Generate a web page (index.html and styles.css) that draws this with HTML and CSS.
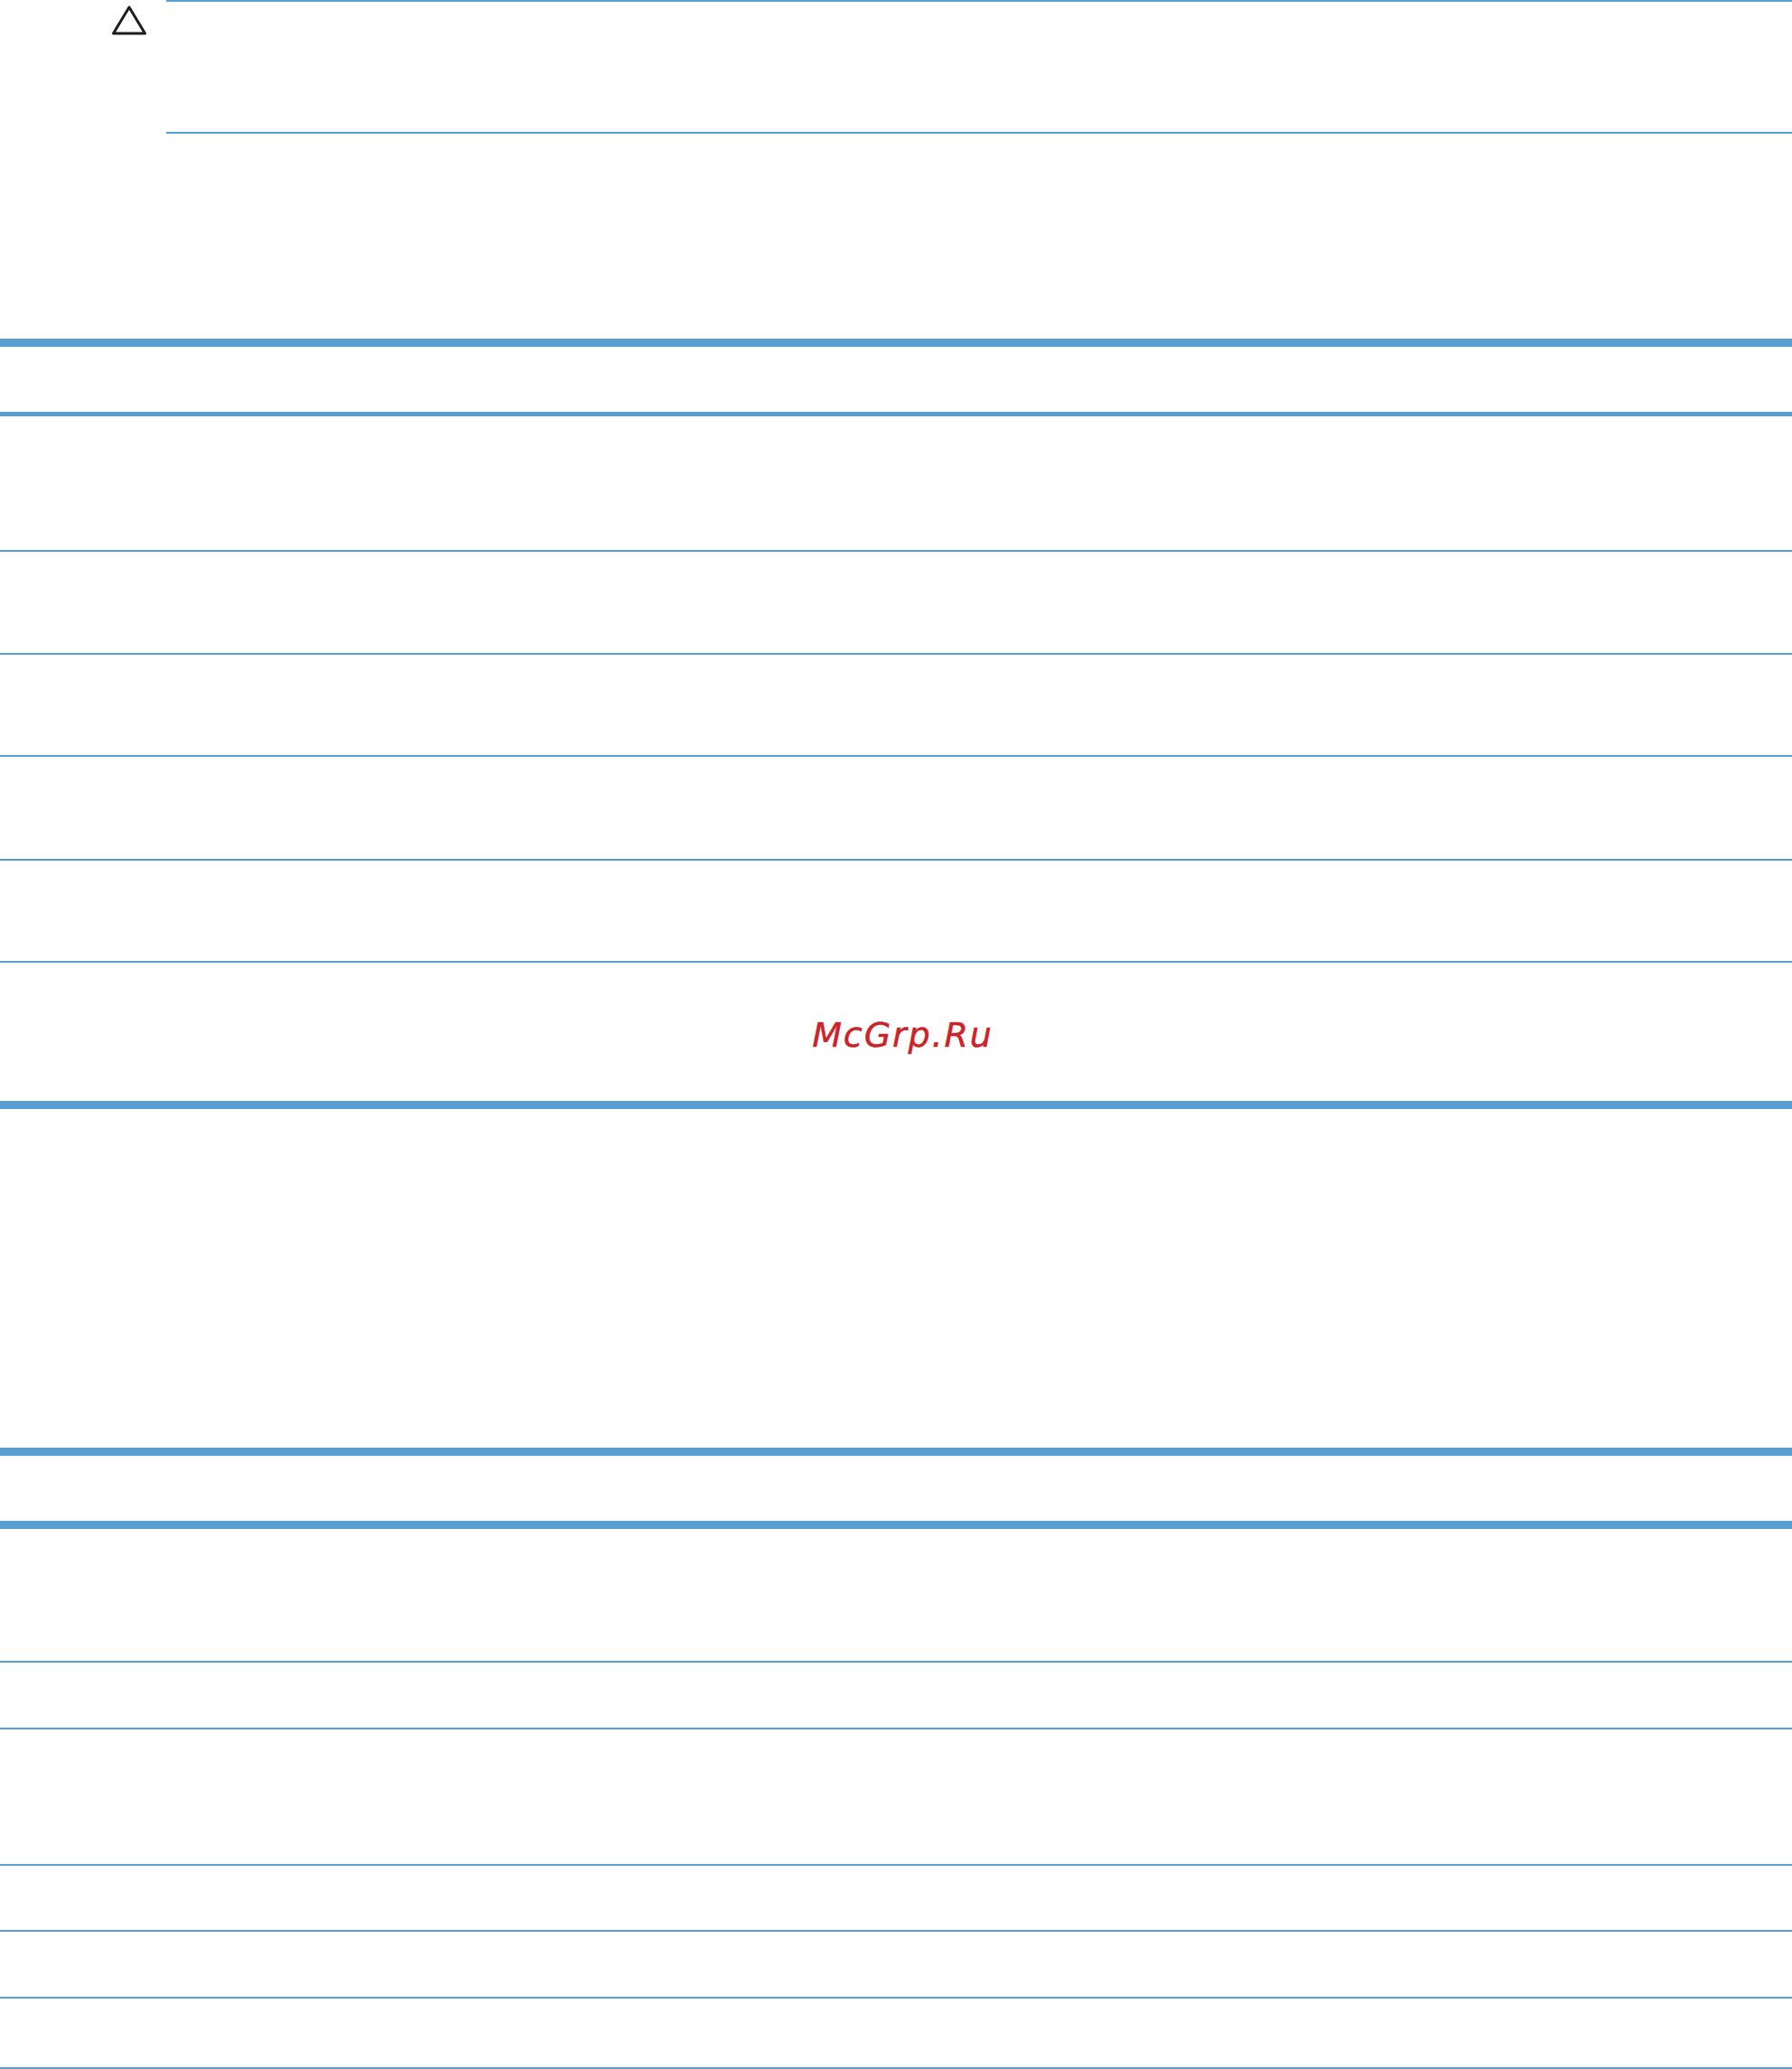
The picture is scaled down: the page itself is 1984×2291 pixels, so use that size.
FILE: index.html
```html
<!DOCTYPE html>
<html lang="ru">
<head>
<meta charset="utf-8">
<title>McGrp.Ru</title>
<link rel="stylesheet" href="styles.css">
</head>
<body>
<main class="page">
  <section class="note">
    <div class="note-icon">
      <svg class="caution" viewBox="0 0 38 33" width="38" height="33" aria-hidden="true">
        <path d="M19 2 L36.500 31 L1.500 31 Z" fill="none" stroke="#1d1d1b" stroke-width="3" stroke-linejoin="round"/>
      </svg>
    </div>
    <div class="note-body"></div>
  </section>

  <section class="table table-one">
    <div class="row head"></div>
    <div class="row"></div>
    <div class="row"></div>
    <div class="row"></div>
    <div class="row"></div>
    <div class="row"></div>
    <div class="row last"><span class="watermark">McGrp.Ru</span></div>
  </section>

  <section class="table table-two">
    <div class="row head"></div>
    <div class="row"></div>
    <div class="row"></div>
    <div class="row"></div>
    <div class="row"></div>
    <div class="row"></div>
    <div class="row"></div>
  </section>
</main>
</body>
</html>
```
FILE: styles.css
```css
* {
  box-sizing: border-box;
}

html,
body {
  margin: 0;
  padding: 0;
  background: #ffffff;
}

.page {
  display: flex;
  flex-direction: column;
  width: 1984px;
  height: 2291px;
  overflow: hidden;
}

.note {
  display: flex;
  height: 148px;
  margin-bottom: 227px;
}

.note-icon {
  flex: 0 0 184px;
  padding: 6px 0 0 124px;
}

.caution {
  display: block;
}

.note-body {
  flex: 1;
  border-top: 2px solid #58a0d4;
  border-bottom: 2px solid #58a0d4;
}

.table {
  display: grid;
  border-top: 9px solid #58a0d4;
}

.table-one {
  grid-template-rows: 77px 150px 114px 113px 115px 113px 162px;
  margin-bottom: 375px;
}

.table-two {
  grid-template-rows: 81px 148px 74px 151px 73px 74px 78px;
}

.row {
  border-bottom: 2px solid #58a0d4;
}

.row.head {
  border-bottom-width: 5px;
}

.table-two .row.head {
  border-bottom-width: 9px;
}

.row.last {
  display: flex;
  justify-content: center;
  align-items: flex-start;
  padding: 58px 0 0 15px;
  border-bottom-width: 9px;
}

.watermark {
  font-family: "DejaVu Sans", sans-serif;
  font-style: italic;
  font-size: 38px;
  line-height: 44px;
  letter-spacing: 1.9px;
  color: #cb2329;
  -webkit-text-stroke: 0.5px #cb2329;
}
```
